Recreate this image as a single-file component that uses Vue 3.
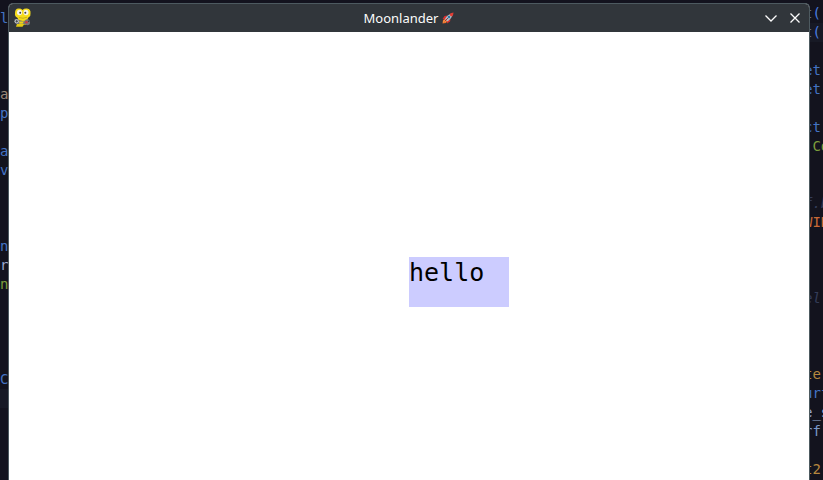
<script setup>
const leftLines = ['l', '', '', '', 'a', 'p', '', 'a', 'v', '', '', '', 'n', 'r', 'n', '', '', '', '', 'C', '', '', '', '', '']
const leftTones = { 4: 'sand', 13: 'pale', 14: 'green' }
const leftActive = 20
const rightActive = 1
const rightLines = [
  [['t', 'muted'], ["('", 'bright']],
  [['t', 'muted'], ["('", 'bright']],
  [],
  [['et', 'blue']],
  [['et', 'blue']],
  [],
  [['ct', 'blue']],
  [[' Co', 'green']],
  [],
  [],
  [['f.b', 'comment']],
  [['WIN', 'orange']],
  [],
  [],
  [],
  [['el', 'comment']],
  [],
  [],
  [],
  [['te', 'gold']],
  [['urf', 'blue']],
  [['e_s', 'pale']],
  [['rf', 'steel']],
  [],
  [['t2', 'gold']],
]
</script>

<template>
  <div class="desktop">
    <div class="code code-left" aria-hidden="true">
      <div
        v-for="(line, i) in leftLines"
        :key="i"
        class="line"
        :class="[leftTones[i] || 'blue', { active: i === leftActive }]"
      >{{ line }}</div>
    </div>

    <main class="window">
      <header class="titlebar">
        <svg class="app-icon" viewBox="0 0 20 20" aria-hidden="true">
          <path d="M5 9 4.500 14 3 18.700H9.500L11 16.500 12.500 17 14 14 15 10Z" fill="#e5cb10" />
          <path d="M2 5Q2 .8 5.500.6 8 .4 9.500 2 11 .4 14 .6 18 1 17.500 5.500 18 8 15.500 9.500 12.500 12.500 9.500 12.500 6 12.300 4 9.500 1.500 8 2 5Z" fill="#f5dc1c" />
          <ellipse cx="6.500" cy="4.500" rx="2.500" ry="2.800" fill="#f4f4ee" />
          <ellipse cx="13" cy="4.500" rx="2.500" ry="2.800" fill="#f4f4ee" />
          <circle cx="7.200" cy="4.800" r="1" fill="#44423c" />
          <circle cx="12.300" cy="4.800" r="1" fill="#44423c" />
          <path d="M6 9.500Q10 11.200 14 9.200" fill="none" stroke="#b49d14" stroke-width=".7" />
          <path d="M1.500 11.500Q3.500 10.300 6 12L11 13.500Q13 10.800 15.500 11.500 18 13 16.500 16.500 14 18 11.500 16L7 15.500Q3.500 17 1.500 14.500Z" fill="#74777a" />
          <circle cx="3.700" cy="13.300" r="2.100" fill="#c6c9cb" />
          <path d="M2.500 13.300H5M3.700 12V14.600" stroke="#33383b" stroke-width=".8" />
          <circle cx="13.500" cy="14.300" r="1.300" fill="#c93b40" />
          <circle cx="15.700" cy="13.300" r=".8" fill="#34373b" />
          <path d="M6 13.500H10.500L10 15.500H6.500Z" fill="#efd51b" />
        </svg>
        <h1 class="title">
          Moonlander
          <svg class="rocket" viewBox="0 0 24 24" role="img" aria-label="rocket">
            <path d="M1 23 2 16 7 13 11 17 8 22Z" fill="#f1702c" />
            <path d="M3 21 4 17 8 18Z" fill="#ffe26a" />
            <path d="M11 7 5 8 1 14 8 14Z" fill="#d92f2f" />
            <path d="M17 14 16 19 10 23 10 16Z" fill="#d92f2f" />
            <path d="M6 14Q10 5 22 2 20 13 11 19Z" fill="#a9bfca" />
            <path d="M15 4Q19 1 23 1 23 5 20 9 16 9 15 4Z" fill="#e23d34" />
            <circle cx="14" cy="10" r="2.500" fill="#287aa5" />
            <path d="M5 19 12 12" stroke="#a62835" stroke-width="2" />
          </svg>
        </h1>
        <div class="controls">
          <button type="button" aria-label="Minimize">
            <svg viewBox="0 0 16 16"><path d="M2.500 5.500 8 11 13.500 5.500" /></svg>
          </button>
          <button type="button" aria-label="Close">
            <svg viewBox="0 0 16 16"><path d="M3.500 3.500 12.500 12.500M12.500 3.500 3.500 12.500" /></svg>
          </button>
        </div>
      </header>
      <section class="canvas">
        <div class="label">hello</div>
      </section>
    </main>

    <div class="code code-right" aria-hidden="true">
      <div v-for="(line, i) in rightLines" :key="i" class="line" :class="{ active: i === rightActive }">
        <span v-for="([text, tone], j) in line" :key="j" :class="tone">{{ text }}</span>
      </div>
    </div>
  </div>
</template>

<style>
body {
  background: #13131e;
}
</style>

<style scoped>
.desktop {
  display: grid;
  grid-template-columns: 8px minmax(0, 1fr) 13px;
  height: 100vh;
  overflow: hidden;
  background: #13131e;
}

.code {
  overflow: hidden;
  font: 14px/19px "DejaVu Sans Mono", monospace;
  white-space: pre;
}

.code-left {
  padding-top: 9px;
}

.code-right {
  padding-top: 4px;
}

.line {
  height: 19px;
}

.active {
  background: #171925;
}

.code-right .line {
  display: flex;
  margin-left: -6px;
}

.blue { color: #4474c4; }
.bright { color: #4a7de0; }
.sand { color: #9a8877; }
.pale { color: #9aa9cf; }
.steel { color: #7898c9; }
.green { color: #7d9d3c; }
.gold { color: #b5873f; }
.orange { color: #c96a37; }
.muted { color: #626a7c; }
.comment { color: #343c58; font-style: italic; }

.window {
  display: flex;
  flex-direction: column;
  margin-top: 3px;
  border: 1px solid #4d5a60;
  border-bottom: 0;
  border-radius: 5px 5px 0 0;
  overflow: hidden;
  background: #fff;
}

.titlebar {
  display: grid;
  grid-template-columns: 64px 1fr 64px;
  align-items: center;
  flex: none;
  height: 28px;
  background: #31363b;
  color: #fcfcfc;
}

.app-icon {
  width: 20px;
  height: 20px;
  margin-left: 4px;
}

.title {
  display: flex;
  align-items: center;
  justify-content: center;
  gap: 4px;
  margin: 0;
  font: 400 13px/20px "Noto Sans", sans-serif;
}

.rocket {
  width: 12px;
  height: 12px;
}

.controls {
  display: flex;
  justify-content: flex-end;
  gap: 8px;
  padding-right: 6px;
}

.controls button {
  display: flex;
  padding: 0;
  border: 0;
  background: none;
  color: inherit;
}

.controls svg {
  width: 16px;
  height: 16px;
  fill: none;
  stroke: currentColor;
  stroke-width: 1.3;
}

.canvas {
  position: relative;
  flex: 1;
}

.label {
  position: absolute;
  top: 225px;
  left: 50%;
  width: 100px;
  height: 50px;
  background: #ccccff;
  color: #000;
  font: 25px/32px "DejaVu Sans Mono", monospace;
}
</style>
